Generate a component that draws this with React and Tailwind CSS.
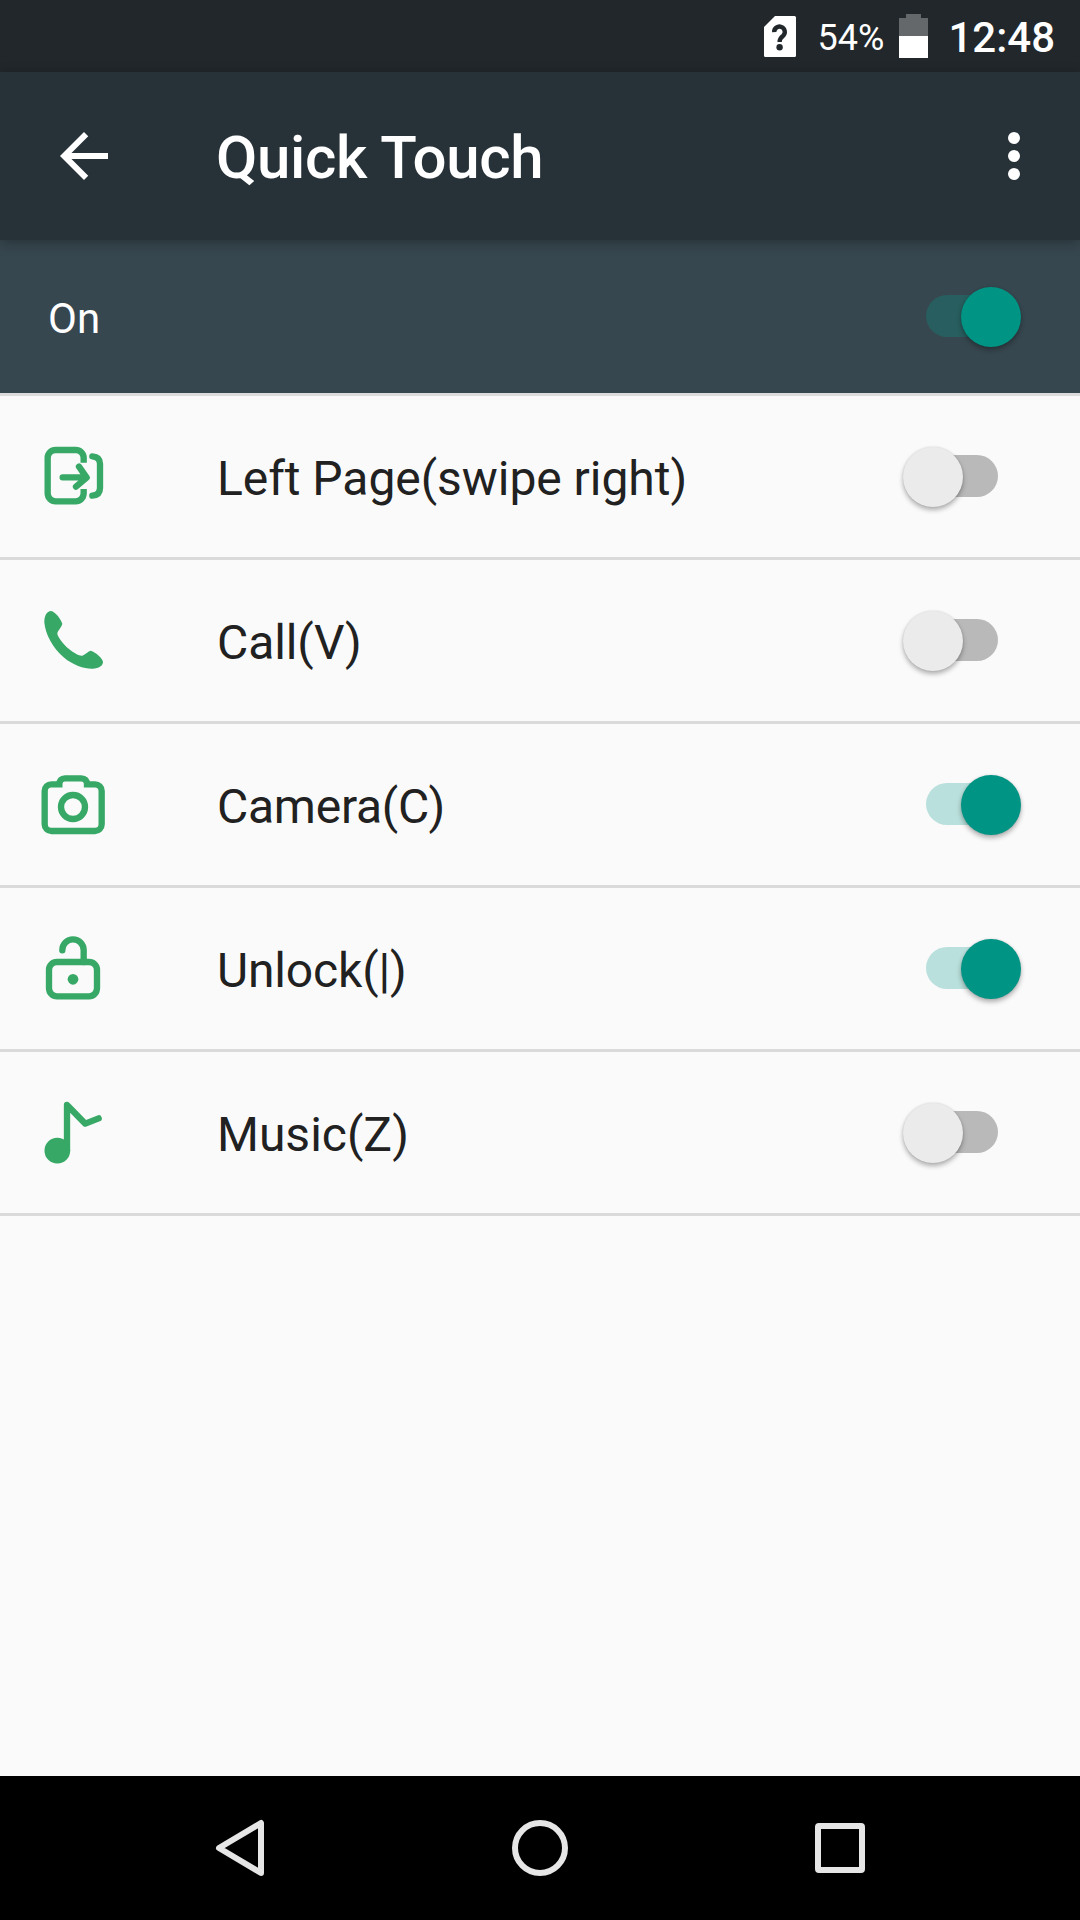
import React, { useState } from "react";

const stroke = {
  fill: "none",
  stroke: "#37a866",
  strokeWidth: 19,
  strokeLinecap: "round",
  strokeLinejoin: "round",
};

function LeftPageIcon() {
  return (
    <svg className="size-[72px]" viewBox="48 30 216 216" {...stroke}>
      <path
        strokeLinecap="butt"
        d="M191 98V84a24 24 0 0 0-24-24H107a24 24 0 0 0-24 24V190a24 24 0 0 0 24 24H167a24 24 0 0 0 24-24V177"
      />
      <path d="M128 142H196M177 110L200 143L168 170" />
      <path d="M217 79C232 80 240 87 240 101V174C240 188 232 196 217 197" />
    </svg>
  );
}

function CallIcon() {
  return (
    <svg className="size-[72px]" viewBox="48 27 216 216" fill="#37a866">
      <path d="M93 48C80 49 73 62 73 82C76 120 100 160 130 186C160 212 195 222 218 221C237 220 249 212 249 201C248 190 228 172 212 167C205 168 196 178 187 182C180 184 165 177 148 163C130 148 112 124 112 116C112 108 124 98 127 87C124 74 106 50 93 48Z" />
    </svg>
  );
}

function CameraIcon() {
  return (
    <svg className="size-[72px]" viewBox="48 24 216 216" {...stroke}>
      <path
        strokeLinejoin="miter"
        d="M94 73H118C118 62 124 55 135 55H184C195 55 201 62 201 73H225A20 20 0 0 1 245 93V193A20 20 0 0 1 225 213H94A20 20 0 0 1 74 193V93A20 20 0 0 1 94 73Z"
      />
      <circle cx="159" cy="141" r="36" />
    </svg>
  );
}

function UnlockIcon() {
  return (
    <svg className="size-[72px]" viewBox="48 36 216 216" {...stroke}>
      <rect x="87" y="126" width="144" height="103" rx="24" />
      <path d="M127 91V90A32 32 0 0 1 191 90V126" />
      <circle cx="159" cy="178" r="16" fill="#37a866" stroke="none" />
    </svg>
  );
}

function MusicIcon() {
  return (
    <svg className="size-[72px]" viewBox="48 33 216 216" {...stroke}>
      <path d="M141 197V60L196 116L236 100" />
      <circle cx="112" cy="197" r="38.5" fill="#37a866" stroke="none" />
    </svg>
  );
}

function Switch({ checked, onChange, dark }) {
  const track = checked
    ? dark
      ? "bg-[#285e5f]"
      : "bg-[#b9e0dc]"
    : "bg-[#b9b9b9]";
  const thumb = checked
    ? "right-px bg-[#009485]"
    : "left-px bg-[#ebebeb]";
  return (
    <button
      role="switch"
      aria-checked={checked}
      onClick={onChange}
      className="relative flex h-[60px] w-[120px] items-center justify-center">
      <span className={`h-[42px] w-[72px] rounded-full ${track}`} />
      <span
        className={`absolute top-px size-[60px] rounded-full shadow-[0_3px_5px_rgba(0,0,0,0.3),0_0_2px_rgba(0,0,0,0.12)] ${thumb}`}
      />
    </button>
  );
}

function StatusBar() {
  return (
    <div className="flex h-[72px] items-center justify-end bg-[#21272b] pr-[25px] text-white">
      <svg className="mr-[21px] h-[42px] w-[34px]" viewBox="0 0 34 42">
        <path d="M12 1H31.5Q33 1 33 2.5V40.5Q33 42 31.5 42H2.5Q1 42 1 40.5V12Z" fill="#fff" />
        <path
          d="M11.2 17.2A5.3 5.3 0 1 1 20.3 20.6C18 22.4 16.6 23.4 16.6 27"
          fill="none"
          stroke="#21272b"
          strokeWidth="4.4"
        />
        <circle cx="16.6" cy="32.2" r="3.2" fill="#21272b" />
      </svg>
      <span className="mr-[15px] pt-[4px] text-[36px] leading-[48px]">54%</span>
      <svg className="mr-[20px] h-[44px] w-[29px]" viewBox="0 0 29 44">
        <path d="M7 0H22V4H29V22H0V4H7Z" fill="#64686b" />
        <path d="M0 22H29V44H0Z" fill="#fff" />
      </svg>
      <span className="pt-[4px] text-[42px] leading-[48px] font-medium">12:48</span>
    </div>
  );
}

function AppBar() {
  return (
    <header className="z-10 flex h-[168px] items-center bg-[#273238] pl-[48px] pr-[30px] text-white shadow-[0_3px_12px_rgba(0,0,0,0.3)]">
      <svg className="mr-[96px] size-[72px]" viewBox="0 0 24 24" fill="#fff">
        <path d="M20 11H7.83l5.59-5.59L12 4l-8 8 8 8 1.41-1.41L7.83 13H20v-2z" />
      </svg>
      <h1 className="flex-1 pt-[4px] text-[60px] leading-[72px] font-medium tracking-[-0.3px]">
        Quick Touch
      </h1>
      <svg className="size-[72px]" viewBox="0 0 24 24" fill="#fff">
        <circle cx="12" cy="6" r="2" />
        <circle cx="12" cy="12" r="2" />
        <circle cx="12" cy="18" r="2" />
      </svg>
    </header>
  );
}

function NavBar() {
  return (
    <nav className="flex h-[144px] items-center justify-center bg-black">
      <div className="flex w-[300px] justify-center">
        <svg className="size-[60px]" viewBox="0 0 60 60" fill="none" stroke="#e6e6e6" strokeWidth="6" strokeLinejoin="round">
          <path d="M9 30L51 5V55Z" />
        </svg>
      </div>
      <div className="flex w-[300px] justify-center">
        <div className="size-[56px] rounded-full border-6 border-[#e6e6e6]" />
      </div>
      <div className="flex w-[300px] justify-center">
        <div className="size-[50px] rounded-[4px] border-6 border-[#e6e6e6]" />
      </div>
    </nav>
  );
}

const gestures = [
  { id: "left", label: "Left Page(swipe right)", Icon: LeftPageIcon, tracking: "tracking-[-0.05px]" },
  { id: "call", label: "Call(V)", Icon: CallIcon, tracking: "tracking-[-0.1px]" },
  { id: "camera", label: "Camera(C)", Icon: CameraIcon, tracking: "tracking-[-0.25px]" },
  { id: "unlock", label: "Unlock(|)", Icon: UnlockIcon, tracking: "tracking-[-0.15px]" },
  { id: "music", label: "Music(Z)", Icon: MusicIcon, tracking: "tracking-normal" },
];

export default function App() {
  const [enabled, setEnabled] = useState(true);
  const [active, setActive] = useState({ camera: true, unlock: true });

  return (
    <div className="flex h-[1920px] w-[1080px] flex-col overflow-hidden bg-[#fafafa] font-['Roboto',sans-serif]">
      <StatusBar />
      <AppBar />

      {/* Master switch */}
      <div className="flex h-[156px] items-center justify-between border-b-3 border-[#dcdcdc] bg-[#37474f] pr-[58px] pb-px pl-[48px]">
        <span className="pt-[6px] text-[42px] leading-[48px] text-white">
          {enabled ? "On" : "Off"}
        </span>
        <Switch dark checked={enabled} onChange={() => setEnabled(!enabled)} />
      </div>

      <ul className="flex-1">
        {gestures.map(({ id, label, Icon, tracking }) => (
          <li
            key={id}
            className="flex h-[164px] items-center border-b-3 border-[#dadada] pr-[58px] pb-px pl-[36px]">
            <Icon />
            <span className={`ml-[109px] flex-1 pt-[6px] text-[48px] leading-[56px] text-[#212121] ${tracking}`}>
              {label}
            </span>
            <Switch
              checked={!!active[id]}
              onChange={() => setActive({ ...active, [id]: !active[id] })}
            />
          </li>
        ))}
      </ul>

      <NavBar />
    </div>
  );
}
